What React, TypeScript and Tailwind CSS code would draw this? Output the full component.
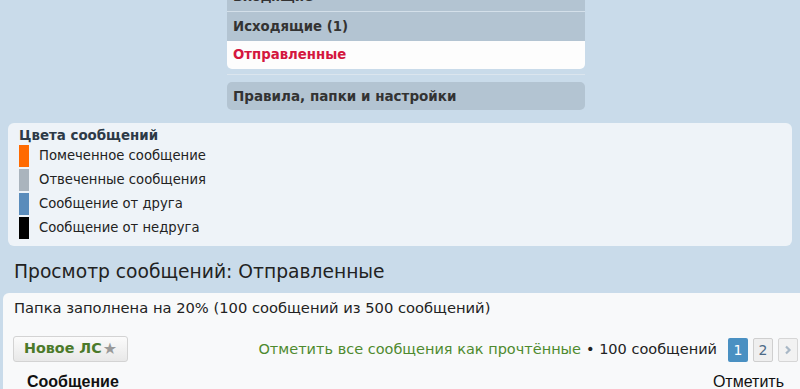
import React from "react";

const legend = [
  { color: "bg-[#ff6a00]", label: "Помеченное сообщение" },
  { color: "bg-[#aab4bd]", label: "Отвеченные сообщения" },
  { color: "bg-[#5a8cbb]", label: "Сообщение от друга" },
  { color: "bg-black", label: "Сообщение от недруга" },
];

export default function App() {
  return (
    <div className="w-[800px] h-[389px] overflow-hidden bg-[#c9dbea] text-[#333] font-['DejaVu_Sans',Verdana,sans-serif]">
      <div className="ml-[227px] w-[358px] mt-[-18px] flex flex-col">
        <div className="h-[29px] bg-[#b3c4d2] px-[6px] flex items-center text-[13.3px] font-bold">Входящие</div>
        <div className="h-px bg-[#d4e0ea]"></div>
        <div className="h-[29px] bg-[#b3c4d2] px-[6px] flex items-center text-[13.3px] font-bold">Исходящие (1)</div>
        <div className="h-[28px] bg-[#fdfdfd] rounded-b-[5px] px-[6px] flex items-center text-[13.3px] font-bold text-[#d4173f]">Отправленные</div>
        <div className="h-px bg-[#dbe5ee] mt-[5px]"></div>
        <div className="h-[28px] mt-[7px] bg-[#b3c4d2] rounded-[5px] px-[6px] flex items-center text-[13.5px] font-bold">Правила, папки и настройки</div>
      </div>

      <div className="mx-[8px] mt-[13px] h-[123px] rounded-[6px] bg-[#eef3f8] pl-[11px] pt-[4px]">
        <div className="text-[13.4px] font-bold text-[#2d3a47] leading-[17px]">Цвета сообщений</div>
        <div className="flex flex-col gap-[2px] mt-[1px]">
          {legend.map((l) => (
            <div key={l.label} className="flex items-center h-[22px]">
              <div className={`w-[10px] h-[22px] ${l.color}`}></div>
              <span className="ml-[10px] text-[13.2px] text-[#222]">{l.label}</span>
            </div>
          ))}
        </div>
      </div>

      <div className="pl-[14px] pt-[12px] h-[47px] text-[18.7px] text-[#222]">Просмотр сообщений: Отправленные</div>

      <div className="ml-[3px] rounded-tl-[6px] bg-[#f8f9fa] h-[97px] pt-[4px]">
        <div className="pl-[11px] text-[14.7px] text-[#222] leading-[22px]">Папка заполнена на 20% (100 сообщений из 500 сообщений)</div>
        <div className="mt-[16px] flex items-center pl-[10px] pr-[2px]">
          <div className="h-[26px] w-[115px] rounded-[3px] border border-[#d3d3d3] bg-gradient-to-b from-[#fbfbfb] to-[#e8e8e8] flex items-center pl-[10px] text-[14.3px] font-bold text-[#4b7a2a]">
            Новое ЛС<span className="text-[#999] text-[16px] ml-[1px]">★</span>
          </div>
          <div className="flex-1 flex justify-end items-center text-[14.5px] mt-[3px]">
            <span className="text-[#4e8a2e]">Отметить все сообщения как прочтённые</span>
            <span className="text-[#222] ml-[5px]">• 100 сообщений</span>
            <div className="flex gap-[5px] ml-[11px] text-[14px]">
              <div className="w-[20px] h-[24px] rounded-[2px] bg-[#4a90c2] text-white flex items-center justify-center">1</div>
              <div className="w-[20px] h-[24px] rounded-[2px] bg-[#efefef] border border-[#cfcfcf] text-[#4d6a86] flex items-center justify-center">2</div>
              <div className="w-[20px] h-[24px] rounded-[2px] bg-[#f2f2f2] border border-[#d6d6d6] flex items-center justify-center">
                <svg width="8" height="10" viewBox="0 0 8 10">
                  <path d="M2 1.5 L5.5 5 L2 8.5" fill="none" stroke="#a9b8c6" strokeWidth="2.2" />
                </svg>
              </div>
            </div>
          </div>
        </div>
        <div className="flex justify-between mt-[10px] pl-[24px] pr-[16px] font-['Liberation_Sans',Arial,sans-serif] text-[#111] text-[16px] leading-[20px]">
          <span className="font-bold">Сообщение</span>
          <span>Отметить</span>
        </div>
      </div>
    </div>
  );
}
